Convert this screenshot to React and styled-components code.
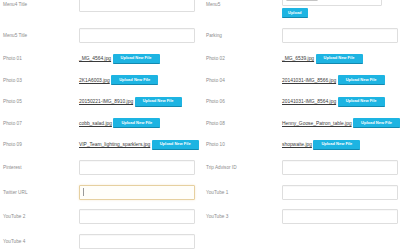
import React from 'react';
import styled, { createGlobalStyle } from 'styled-components';

const Global = createGlobalStyle`
  html, body {
    margin: 0;
    padding: 0;
    background: #fff;
    overflow: hidden;
  }
  * {
    box-sizing: border-box;
  }
`;

const Page = styled.div`
  width: 400px;
  height: 250px;
  overflow: hidden;
  font-family: 'Liberation Sans', Arial, sans-serif;
`;

const Form = styled.div`
  margin-top: -14.5px;
  padding-left: 3px;
  display: grid;
  grid-template-columns: 192px 192px;
  column-gap: 11px;
`;

const Field = styled.div`
  display: flex;
  align-items: center;
  min-height: ${(p) => (p.$photo ? '21.5px' : '24.5px')};
  padding: ${(p) => (p.$tall ? '5.5px 0' : '0')};
`;

const Label = styled.div`
  width: 76px;
  flex-shrink: 0;
  font-size: 4.7px;
  color: #8c8c8c;
`;

const Control = styled.div`
  flex: 1;
  display: flex;
  flex-direction: ${(p) => (p.$stack ? 'column' : 'row')};
  align-items: ${(p) => (p.$stack ? 'flex-start' : 'center')};
  gap: ${(p) => (p.$stack ? '2px' : '0')};
`;

const TextBox = styled.div`
  width: 100%;
  height: 15px;
  display: flex;
  align-items: center;
  padding-left: 3px;
  border: 1px solid ${(p) => (p.$focus ? '#e6d0a0' : '#dedede')};
  border-radius: 1px;
  background: ${(p) => (p.$focus ? '#fffefa' : '#fff')};
  box-shadow: ${(p) =>
    p.$focus
      ? '0 0 2px rgba(232, 200, 140, 0.45)'
      : 'inset 0 1px 1px rgba(0, 0, 0, 0.03)'};
`;

const Caret = styled.span`
  width: 1px;
  height: 8px;
  background: #9a9a9a;
`;

const FileBox = styled.div`
  width: 100px;
  height: 15px;
  display: flex;
  align-items: flex-end;
  padding: 0 0 4px 3px;
  border: 1px solid #dedede;
  border-radius: 1px;
`;

const ChooseFile = styled.span`
  width: 32px;
  height: 8px;
  border: 1px solid #c4c4c4;
  border-radius: 1px;
  background: #ececec;
`;

const FileName = styled.a`
  font-size: 4.9px;
  color: #3a3a3a;
  text-decoration: underline;
  white-space: nowrap;
`;

const Button = styled.button`
  height: 10px;
  margin-left: ${(p) => (p.$solo ? '0' : '1.5px')};
  padding: 0 ${(p) => (p.$solo ? '6px' : '8px')};
  border: none;
  border-bottom: 1.5px solid #1289b0;
  border-radius: 1px;
  background: #1db4e2;
  color: #fff;
  font-family: 'Liberation Sans', Arial, sans-serif;
  font-size: 4px;
  font-weight: bold;
  white-space: nowrap;
  line-height: 1;
`;

const photos = [
  ['Photo 01', '_MG_4564.jpg'],
  ['Photo 02', '_MG_6539.jpg'],
  ['Photo 03', '2K1A6003.jpg'],
  ['Photo 04', '20141031-IMG_8566.jpg'],
  ['Photo 05', '20150221-IMG_8910.jpg'],
  ['Photo 06', '20141031-IMG_8564.jpg'],
  ['Photo 07', 'cobb_salad.jpg'],
  ['Photo 08', 'Henny_Goose_Patron_table.jpg'],
  ['Photo 09', 'VIP_Team_lighting_sparklers.jpg'],
  ['Photo 10', 'shopwaite.jpg'],
];

const textFields = [
  ['Pinterest'],
  ['Trip Advisor ID'],
  ['Twitter URL', true],
  ['YouTube 1'],
  ['YouTube 2'],
  ['YouTube 3'],
  ['YouTube 4'],
];

export default function App() {
  return (
    <Page>
      <Global />
      <Form>
        <Field>
          <Label>Menu4 Title</Label>
          <Control>
            <TextBox />
          </Control>
        </Field>
        <Field $tall>
          <Label>Menu5</Label>
          <Control $stack>
            <FileBox>
              <ChooseFile />
            </FileBox>
            <Button $solo>Upload</Button>
          </Control>
        </Field>

        <Field>
          <Label>Menu5 Title</Label>
          <Control>
            <TextBox />
          </Control>
        </Field>
        <Field>
          <Label>Parking</Label>
          <Control>
            <TextBox />
          </Control>
        </Field>

        {photos.map(([label, file]) => (
          <Field $photo key={label}>
            <Label>{label}</Label>
            <Control>
              <FileName href="#">{file}</FileName>
              <Button>Upload New File</Button>
            </Control>
          </Field>
        ))}

        {textFields.map(([label, focus]) => (
          <Field key={label}>
            <Label>{label}</Label>
            <Control>
              <TextBox $focus={focus}>{focus && <Caret />}</TextBox>
            </Control>
          </Field>
        ))}
      </Form>
    </Page>
  );
}
